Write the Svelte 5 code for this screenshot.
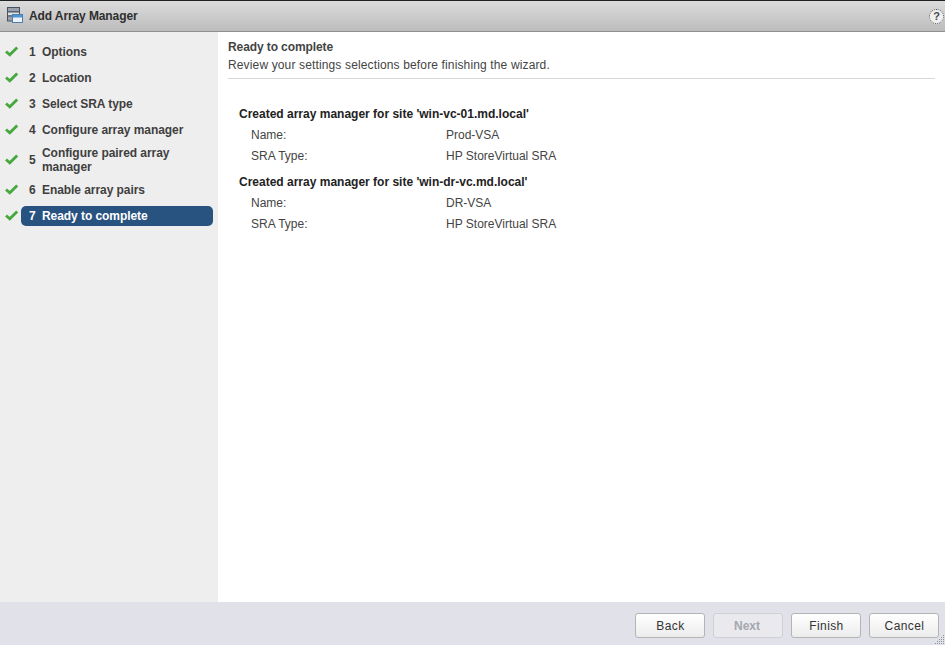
<script>
  const steps = [
    { n: 1, label: "Options" },
    { n: 2, label: "Location" },
    { n: 3, label: "Select SRA type" },
    { n: 4, label: "Configure array manager" },
    { n: 5, label: "Configure paired array manager", tall: true },
    { n: 6, label: "Enable array pairs" },
    { n: 7, label: "Ready to complete", active: true },
  ];

  const sites = [
    { site: "win-vc-01.md.local", name: "Prod-VSA", type: "HP StoreVirtual SRA" },
    { site: "win-dr-vc.md.local", name: "DR-VSA", type: "HP StoreVirtual SRA" },
  ];
</script>

<div class="dialog">
  <header class="titlebar">
    <svg class="title-icon" width="18" height="18" viewBox="0 0 18 18">
      <rect x="1.5" y="0.5" width="12" height="4.5" fill="#9aa1ac" stroke="#46525f" />
      <rect x="1.5" y="5" width="12" height="4" fill="#dfe3e8" stroke="#46525f" />
      <rect x="1.5" y="9" width="12" height="5" fill="#9aa1ac" stroke="#46525f" />
      <rect x="6.5" y="7.5" width="10" height="8" fill="#eaf3fb" stroke="#4f7ea8" />
      <rect x="7" y="8" width="9" height="2.5" fill="#4f97d4" />
    </svg>
    <span class="title">Add Array Manager</span>
    <span class="help">?</span>
  </header>

  <div class="body">
    <nav class="steps">
      {#each steps as s}
        <div class="step" class:tall={s.tall}>
          <svg class="check" width="16" height="14" viewBox="0 0 16 14">
            <path d="M3 6.5 L6.8 9.8 L14.2 2.5" fill="none" stroke="#46a83c" stroke-width="2.8" />
          </svg>
          <div class="pill" class:active={s.active}>
            <span class="num">{s.n}</span>
            <span class="label">{s.label}</span>
          </div>
        </div>
      {/each}
    </nav>

    <main class="content">
      <div class="head">
        <h2>Ready to complete</h2>
        <p>Review your settings selections before finishing the wizard.</p>
      </div>
      <div class="summary">
        {#each sites as site}
          <section class="site">
            <h3>Created array manager for site '{site.site}'</h3>
            <div class="row"><span class="key">Name:</span><span>{site.name}</span></div>
            <div class="row"><span class="key">SRA Type:</span><span>{site.type}</span></div>
          </section>
        {/each}
      </div>
    </main>
  </div>

  <footer class="footer">
    <button>Back</button>
    <button class="disabled" disabled>Next</button>
    <button>Finish</button>
    <button>Cancel</button>
    <svg class="grip" width="10" height="10" viewBox="0 0 10 10">
      <g fill="#8d929c">
        <rect x="8" y="0" width="1" height="1" />
        <rect x="6" y="2" width="1" height="1" /><rect x="8" y="2" width="1" height="1" />
        <rect x="4" y="4" width="1" height="1" /><rect x="6" y="4" width="1" height="1" /><rect x="8" y="4" width="1" height="1" />
        <rect x="2" y="6" width="1" height="1" /><rect x="4" y="6" width="1" height="1" /><rect x="6" y="6" width="1" height="1" /><rect x="8" y="6" width="1" height="1" />
        <rect x="0" y="8" width="1" height="1" /><rect x="2" y="8" width="1" height="1" /><rect x="4" y="8" width="1" height="1" /><rect x="6" y="8" width="1" height="1" /><rect x="8" y="8" width="1" height="1" />
      </g>
    </svg>
  </footer>
</div>

<style>
  :global(body) {
    margin: 0;
    background: #fff;
  }

  .dialog {
    width: 945px;
    height: 645px;
    display: flex;
    flex-direction: column;
    font-family: "Liberation Sans", Arial, sans-serif;
    font-size: 12px;
    color: #333;
    overflow: hidden;
  }

  .titlebar {
    flex: 0 0 32px;
    box-sizing: border-box;
    height: 32px;
    display: flex;
    align-items: center;
    padding-left: 6px;
    border-top: 1px solid #222;
    border-bottom: 1px solid #8f8f8f;
    background: linear-gradient(#dcdcdc, #bcbcbc);
  }

  .title-icon {
    margin-right: 5px;
  }

  .title {
    font-weight: bold;
    font-size: 12px;
    letter-spacing: -0.1px;
    color: #2e2e2e;
  }

  .help {
    margin-left: auto;
    margin-right: 1px;
    width: 13px;
    height: 13px;
    border-radius: 50%;
    background: #f0f0f0;
    border: 1px dotted #555;
    color: #4a4a4a;
    font-size: 11px;
    font-weight: bold;
    line-height: 13px;
    text-align: center;
  }

  .body {
    flex: 1;
    display: flex;
    min-height: 0;
  }

  .steps {
    flex: 0 0 218px;
    box-sizing: border-box;
    background: #eeeeee;
    padding-top: 7px;
  }

  .step {
    display: flex;
    align-items: center;
    height: 26px;
    padding-left: 3px;
  }

  .step.tall {
    height: 34px;
  }

  .check {
    flex: none;
    margin-right: 2px;
  }

  .pill {
    width: 192px;
    height: 20px;
    box-sizing: border-box;
    display: flex;
    align-items: center;
    padding-left: 8px;
    border-radius: 5px;
    font-weight: bold;
    letter-spacing: -0.06px;
    color: #3f3f3f;
    line-height: 14px;
  }

  .tall .pill {
    height: 28px;
    padding-right: 30px;
  }

  .pill.active {
    background: #28527f;
    color: #fff;
  }

  .num {
    flex: none;
    width: 13px;
  }

  .content {
    flex: 1;
    padding: 8px 10px 0;
    min-width: 0;
  }

  .head {
    padding-bottom: 6px;
    border-bottom: 1px solid #d8d8d8;
    margin-bottom: 26px;
  }

  h2 {
    margin: 0 0 4px;
    font-size: 12px;
    line-height: 14px;
    font-weight: bold;
    letter-spacing: -0.1px;
    color: #444;
  }

  .head p {
    margin: 0;
    line-height: 14px;
    letter-spacing: 0.14px;
    color: #444;
  }

  .summary {
    padding-left: 11px;
  }

  .site {
    margin-bottom: 7px;
  }

  h3 {
    margin: 0 0 2px;
    padding-top: 1px;
    font-size: 12px;
    line-height: 16px;
    font-weight: bold;
    color: #222;
  }

  .row {
    display: flex;
    height: 21px;
    align-items: center;
    padding-left: 12px;
    color: #444;
  }

  .key {
    width: 195px;
  }

  .footer {
    flex: 0 0 43px;
    box-sizing: border-box;
    position: relative;
    display: flex;
    justify-content: flex-end;
    align-items: center;
    gap: 8px;
    padding: 4px 6px 0 0;
    background: #e0e1e9;
  }

  button {
    width: 70px;
    height: 25px;
    padding: 0 0 0 1px;
    font-family: inherit;
    font-size: 12px;
    letter-spacing: 0.4px;
    color: #333;
    border: 1px solid #b4b4b4;
    border-radius: 3px;
    background: linear-gradient(#ffffff, #ececec);
  }

  button.disabled {
    font-weight: bold;
    color: #a4a7ad;
    border-color: #cfd0d6;
    background: #e9e9ee;
    letter-spacing: 0;
    padding: 0 2px 0 0;
  }

  .grip {
    position: absolute;
    right: 0;
    bottom: 0;
  }
</style>
